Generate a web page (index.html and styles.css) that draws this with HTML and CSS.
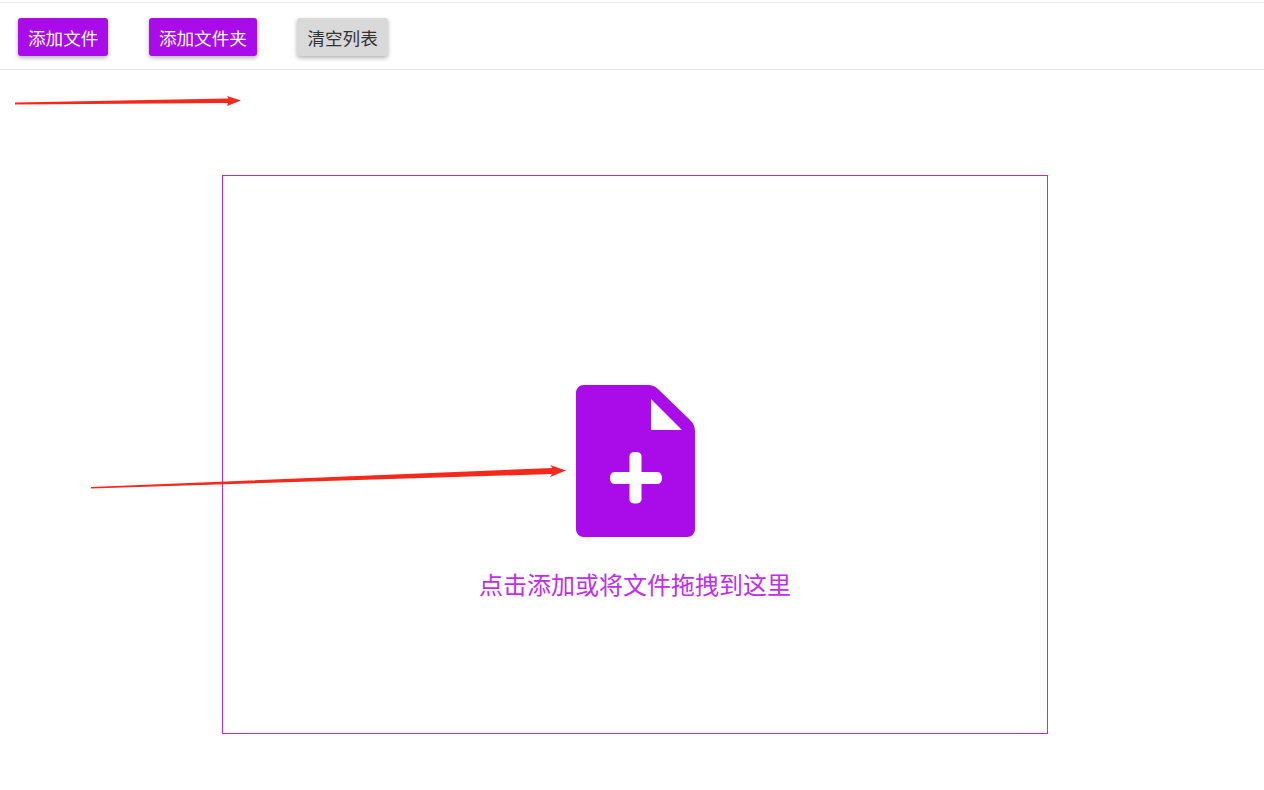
FILE: index.html
```html
<!DOCTYPE html>
<html lang="zh-CN">
<head>
    <meta charset="UTF-8">
    <meta name="viewport" content="width=device-width, initial-scale=1.0">
    <title>添加文件</title>
    <link rel="stylesheet" href="styles.css">
</head>
<body>
    <!-- Toolbar -->
    <div class="toolbar">
        <button class="btn btn-primary">添加文件</button>
        <button class="btn btn-primary">添加文件夹</button>
        <button class="btn btn-default">清空列表</button>
    </div>

    <!-- Drop area -->
    <div class="drop-area">
        <svg class="drop-icon" width="119" height="152" viewBox="0 0 119 152">
            <path fill="#a90ce8" fill-rule="evenodd" d="M8 0H72C76 0 79 1.500 82 4L114 35C117.500 38.500 119 41.500 119 46V144C119 148.500 115.500 152 111 152H8C3.500 152 0 148.500 0 144V8C0 3.500 3.500 0 8 0ZM75 14V45H106Z"/>
            <path fill="#fff" d="M53.500 71C53.500 68.500 56 67 59.500 67S65.500 68.500 65.500 71V87H81.500C84.500 87 86 90 86 93S84.500 99 81.500 99H65.500V114.500C65.500 117 63 118.500 59.500 118.500S53.500 117 53.500 114.500V99H38.500C35.500 99 34 96 34 93S35.500 87 38.500 87H53.500Z"/>
        </svg>
        <p class="drop-text">点击添加或将文件拖拽到这里</p>
    </div>

    <!-- Red annotation arrows drawn over the page -->
    <svg class="annotations" width="1264" height="790" viewBox="0 0 1264 790">
        <polygon fill="#f5281c" points="15,102.500 15,104.500 228,103 227,106 241,100.500 227,96 228.500,98.500"/>
        <polygon fill="#f5281c" points="91,487 91,488.500 552,474 550,477 566,470.500 550,465 552.500,468"/>
    </svg>
</body>
</html>
```

FILE: styles.css
```css
body {
    margin: 0;
    background-color: #fff;
    font-family: "Noto Sans CJK SC", "Liberation Sans", sans-serif;
}

.toolbar {
    display: flex;
    align-items: center;
    gap: 40.500px;
    height: 64px;
    margin-top: 2px;
    padding: 2px 18px 0;
    border-top: 1px solid #e8e8e8;
    border-bottom: 1px solid #e4e4e4;
}

.btn {
    height: 38px;
    padding: 0 10px;
    border: none;
    border-radius: 3px;
    font-family: inherit;
    font-size: 17.600px;
    box-shadow: 0 2px 4px rgba(0, 0, 0, 0.3);
    cursor: pointer;
}

.btn-primary {
    background-color: #a90ce8;
    color: #fff;
}

.btn-default {
    background-color: #d9d9d9;
    color: #333;
}

.drop-area {
    display: flex;
    flex-direction: column;
    align-items: center;
    box-sizing: border-box;
    width: 826px;
    height: 559px;
    margin: 105px 0 0 222px;
    padding-top: 209px;
    border: 1px solid #b32be8;
    cursor: pointer;
}

.drop-icon {
    display: block;
}

.drop-text {
    margin: 29px 0 0;
    font-size: 24px;
    line-height: 36px;
    color: #c22cf0;
}

.annotations {
    position: absolute;
    top: 0;
    left: 0;
    pointer-events: none;
}
```
